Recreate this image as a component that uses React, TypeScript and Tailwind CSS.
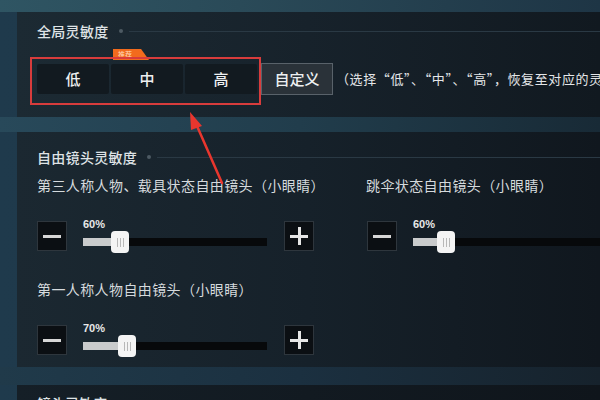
import React from "react";

const font = { fontFamily: '"Noto Sans CJK SC", "Noto Sans", sans-serif' };

function Box({ kind }: { kind: "minus" | "plus" }) {
  return (
    <div className="w-[30px] h-[30px] bg-[#0b0f13] border border-[#2e363d] flex items-center justify-center shrink-0">
      {kind === "minus" ? (
        <div className="w-[18px] h-[3px] bg-[#d6d6d6]" />
      ) : (
        <div className="relative w-[18px] h-[18px]">
          <div className="absolute left-0 top-[7.5px] w-[18px] h-[3px] bg-[#e6e6e6]" />
          <div className="absolute top-0 left-[7.5px] w-[3px] h-[18px] bg-[#e6e6e6]" />
        </div>
      )}
    </div>
  );
}

function Slider({ value, fill, width }: { value: string; fill: number; width: number }) {
  return (
    <div className="flex flex-col mt-[-3px] shrink-0" style={{ width }}>
      <div className="text-[11px] leading-[13px] font-bold text-[#e8e8e8]" style={{ fontFamily: '"Liberation Sans", sans-serif' }}>
        {value}
      </div>
      <div className="relative mt-[7px] h-[8px] bg-[#07090b]">
        <div className="h-full bg-[#c9cbcc]" style={{ width: fill }} />
        <div
          className="absolute top-[-7px] w-[18px] h-[22px] bg-[#f4f4f4] rounded-[4px] flex items-center justify-center gap-[2px]"
          style={{ left: fill - 9 }}
        >
          <div className="w-[1px] h-[9px] bg-[#b8b8b8]" />
          <div className="w-[1px] h-[9px] bg-[#b8b8b8]" />
          <div className="w-[1px] h-[9px] bg-[#b8b8b8]" />
        </div>
      </div>
    </div>
  );
}

function SliderRow({ value, fill, plus, width }: { value: string; fill: number; plus: boolean; width: number }) {
  return (
    <div className="flex items-start">
      <Box kind="minus" />
      <div className="ml-[16px] shrink-0">
        <Slider value={value} fill={fill} width={width} />
      </div>
      {plus && (
        <div className="ml-[17px] shrink-0">
          <Box kind="plus" />
        </div>
      )}
    </div>
  );
}

function Title({ text }: { text: string }) {
  return (
    <div className="flex items-center h-[20px]">
      <span className="text-[14px] leading-[20px] text-[#dfe3e6] font-medium tracking-[0.3px]">{text}</span>
      <span className="ml-[10px] w-[4px] h-[4px] rounded-full bg-[#4d5a63]" />
      <span className="ml-[6px] flex-1 h-[1px] bg-[#2a3944]" />
    </div>
  );
}

export default function App() {
  return (
    <div className="relative w-[600px] h-[400px] overflow-hidden bg-[linear-gradient(90deg,#1f3a4c_0%,#1c3242_100%)] flex flex-col" style={font}>
      <div className="h-[12px] shrink-0 bg-[linear-gradient(90deg,#2f5563_0%,#2a4a58_40%,#1e3545_100%)]" />
      <div className="flex flex-col pl-[17px]">
        {/* Panel 1 */}
        <div className="h-[105px] shrink-0 overflow-hidden bg-[linear-gradient(90deg,#1c2a33_0%,#17222b_50%,#111920_100%)] pl-[20px] pt-[9px]">
          <Title text="全局灵敏度" />
          <div className="flex items-center mt-[22px]">
            <div className="flex gap-[2px] shrink-0">
              {["低", "中", "高"].map((t) => (
                <div
                  key={t}
                  className="w-[72px] h-[30px] rounded-[2px] bg-[#121a20] flex items-center justify-center text-[15px] text-[#eef0f1] font-medium"
                >
                  {t}
                </div>
              ))}
            </div>
            <div className="ml-[4px] shrink-0 whitespace-nowrap w-[72px] h-[32px] bg-[#2a3239] border border-[#59626a] flex items-center justify-center text-[15px] text-[#eef0f1] font-medium">
              自定义
            </div>
            <div className="ml-[3px] shrink-0 whitespace-nowrap text-[13px] tracking-[0.6px] text-[#e4e6e8]">
              （选择“低”、“中”、“高”，恢复至对应的灵敏度设置）
            </div>
          </div>
        </div>
        <div className="h-[15px] shrink-0 bg-[linear-gradient(90deg,#28495a_0%,#213d4c_50%,#182a36_100%)] ml-[-17px]" />
        {/* Panel 2 */}
        <div className="h-[235px] shrink-0 overflow-hidden bg-[linear-gradient(90deg,#1b2831_0%,#16212a_50%,#10171e_100%)] pl-[20px] pt-[15px]">
          <Title text="自由镜头灵敏度" />
          <div className="flex mt-[8px]">
            <div className="w-[329px] shrink-0 flex flex-col">
              <div className="text-[14px] leading-[20px] tracking-[0.4px] text-[#d5dadd] whitespace-nowrap">第三人称人物、载具状态自由镜头（小眼睛）</div>
              <div className="mt-[26px]">
                <SliderRow value="60%" fill={37} plus width={184} />
              </div>
              <div className="mt-[28px] text-[14px] leading-[20px] tracking-[0.4px] text-[#d5dadd] whitespace-nowrap">第一人称人物自由镜头（小眼睛）</div>
              <div className="mt-[26px]">
                <SliderRow value="70%" fill={44} plus width={184} />
              </div>
            </div>
            <div className="flex flex-col shrink-0">
              <div className="text-[14px] leading-[20px] tracking-[0.4px] text-[#d5dadd] whitespace-nowrap">跳伞状态自由镜头（小眼睛）</div>
              <div className="mt-[26px] ml-[1px]">
                <SliderRow value="60%" fill={33} plus={false} width={200} />
              </div>
            </div>
          </div>
        </div>
        <div className="h-[18px] shrink-0 bg-[linear-gradient(90deg,#203a4a_0%,#1b3040_50%,#16222c_100%)] ml-[-17px]" />
        {/* Panel 3 */}
        <div className="flex-1 h-[40px] bg-[linear-gradient(90deg,#151f27_0%,#121a21_50%,#0f151b_100%)] pl-[20px] pt-[8px]">
          <div className="text-[14px] leading-[20px] text-[#dfe3e6] font-medium">镜头灵敏度</div>
        </div>
      </div>

      {/* Annotation: orange tag */}
      <div className="absolute left-[113px] top-[49px] h-[11px] w-[36px] bg-[#f26b1d] [clip-path:polygon(0_0,78%_0,100%_100%,0_100%)] flex items-center pl-[5px] text-[7px] leading-[11px] text-[#ffd9b8]">
        推荐
      </div>
      {/* Annotation: red box */}
      <div className="absolute left-[30px] top-[57px] w-[231px] h-[48px] border-2 border-[#d83c3c]" />
      {/* Annotation: arrow */}
      <svg className="absolute left-0 top-0" width="600" height="400" viewBox="0 0 600 400">
        <path d="M222 183 L197 126" stroke="#e8362e" strokeWidth="2.5" strokeLinecap="round" />
        <path d="M190 112 L202 126 L191 130 Z" fill="#e8362e" />
      </svg>
    </div>
  );
}
